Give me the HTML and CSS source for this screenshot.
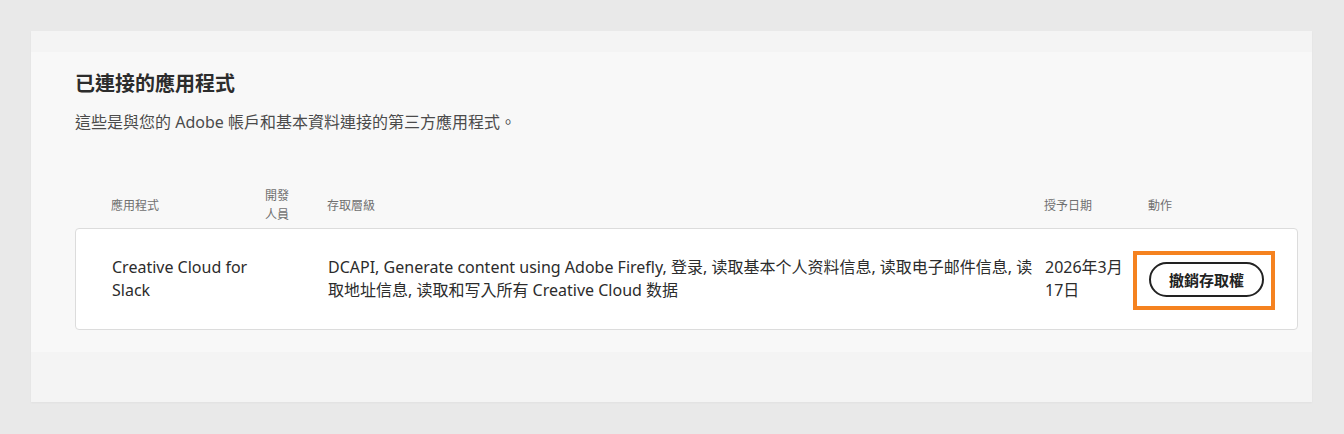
FILE: index.html
```html
<!DOCTYPE html>
<html>
<head>
  <meta charset="utf-8">
  <title>已連接的應用程式</title>
  <link rel="stylesheet" href="styles.css">
</head>
<body>
  <div class="panel">
    <div class="section">
      <h2 class="title">已連接的應用程式</h2>
      <p class="subtitle">這些是與您的 Adobe 帳戶和基本資料連接的第三方應用程式。</p>

      <div class="table">
        <div class="row header">
          <div class="cell">應用程式</div>
          <div class="cell dev">開發人員</div>
          <div class="cell access">存取層級</div>
          <div class="cell">授予日期</div>
          <div class="cell">動作</div>
        </div>

        <div class="row card">
          <div class="cell">Creative Cloud for Slack</div>
          <div class="cell dev"></div>
          <div class="cell access">DCAPI, Generate content using Adobe Firefly, 登录, 读取基本个人资料信息, 读取电子邮件信息, 读取地址信息, 读取和写入所有 Creative Cloud 数据</div>
          <div class="cell">2026年3月17日</div>
          <div class="cell">
            <span class="highlight">
              <button class="revoke-button">撤銷存取權</button>
            </span>
          </div>
        </div>
      </div>
    </div>
  </div>
</body>
</html>
```

FILE: styles.css
```css
body {
  font-family: "Noto Sans", "Noto Sans CJK TC", sans-serif;
  background-color: #e9e9e9;
  margin: 0;
  padding: 31px 32px 32px 31px;
  color: #2c2c2c;
}

.panel {
  background-color: #f4f4f4;
  padding-top: 21px;
  padding-bottom: 50px;
  box-shadow: 0 1px 2px rgba(0, 0, 0, 0.04);
}

.section {
  background-color: #f8f8f8;
  padding: 18px 14px 22px 44px;
}

.title {
  margin: 0;
  font-size: 20px;
  line-height: 28px;
  font-weight: bold;
  color: #2c2c2c;
}

.subtitle {
  margin: 12px 0 0 0;
  font-size: 16px;
  line-height: 24px;
  color: #4b4b4b;
}

.table {
  margin-top: 52px;
}

.row {
  display: grid;
  grid-template-columns: 154px 62px 717px 104px 1fr;
  align-items: center;
  padding-left: 36px;
}

.cell {
  padding-right: 16px;
}

.cell.dev {
  padding-right: 30px;
}

.cell.access {
  padding-right: 2px;
}

.header {
  font-size: 12px;
  line-height: 19px;
  color: #707070;
  margin-bottom: 4px;
}

.card {
  background-color: #ffffff;
  border: 1px solid #dcdcdc;
  border-radius: 4px;
  padding-top: 27px;
  padding-bottom: 27px;
  font-size: 16px;
  line-height: 23px;
}

.highlight {
  position: relative;
  display: inline-block;
}

.highlight::after {
  content: "";
  position: absolute;
  top: -11px;
  bottom: -13px;
  left: -16px;
  right: -11px;
  border: 4px solid #f58220;
  pointer-events: none;
}

.revoke-button {
  display: block;
  font-family: "Noto Sans", "Noto Sans CJK TC", sans-serif;
  font-size: 15px;
  font-weight: bold;
  color: #222222;
  background-color: #ffffff;
  border: 2px solid #222222;
  border-radius: 18px;
  height: 35px;
  padding: 0 18px;
  cursor: pointer;
}
```
